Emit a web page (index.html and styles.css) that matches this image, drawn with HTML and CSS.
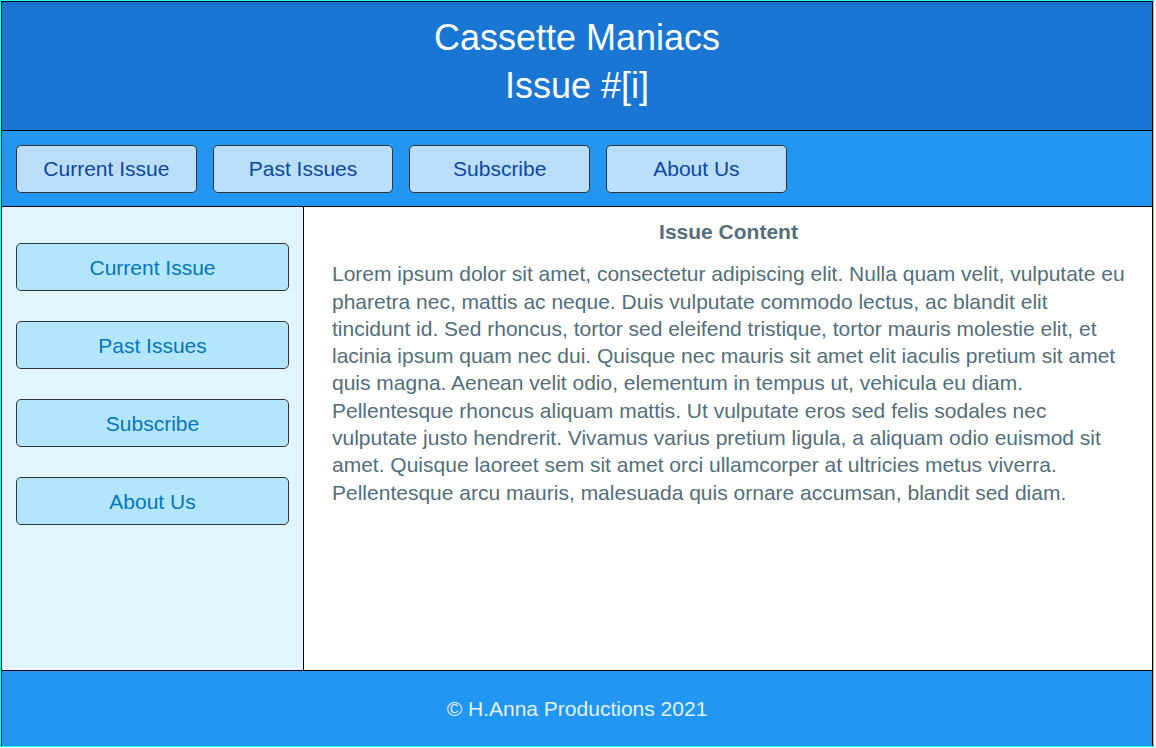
FILE: index.html
```html
<!DOCTYPE html>
<html lang="en">
<head>
<meta charset="utf-8">
<title>Cassette Maniacs</title>
<link rel="stylesheet" href="styles.css">
</head>
<body>
<div class="page">
  <header class="masthead">
    <h1 class="title">Cassette Maniacs<br>Issue #[i]</h1>
  </header>
  <nav class="topnav">
    <a class="topbtn" href="#">Current Issue</a>
    <a class="topbtn" href="#">Past Issues</a>
    <a class="topbtn" href="#">Subscribe</a>
    <a class="topbtn" href="#">About Us</a>
  </nav>
  <aside class="sidebar">
    <a class="sidebtn" href="#">Current Issue</a>
    <a class="sidebtn" href="#">Past Issues</a>
    <a class="sidebtn" href="#">Subscribe</a>
    <a class="sidebtn" href="#">About Us</a>
  </aside>
  <main class="content">
    <h2 class="content-title">Issue Content</h2>
    <p class="content-text">Lorem ipsum dolor sit amet, consectetur adipiscing elit. Nulla quam velit, vulputate eu pharetra nec, mattis ac neque. Duis vulputate commodo lectus, ac blandit elit tincidunt id. Sed rhoncus, tortor sed eleifend tristique, tortor mauris molestie elit, et lacinia ipsum quam nec dui. Quisque nec mauris sit amet elit iaculis pretium sit amet quis magna. Aenean velit odio, elementum in tempus ut, vehicula eu diam. Pellentesque rhoncus aliquam mattis. Ut vulputate eros sed felis sodales nec vulputate justo hendrerit. Vivamus varius pretium ligula, a aliquam odio euismod sit amet. Quisque laoreet sem sit amet orci ullamcorper at ultricies metus viverra. Pellentesque arcu mauris, malesuada quis ornare accumsan, blandit sed diam.</p>
  </main>
  <footer class="footer">© H.Anna Productions 2021</footer>
</div>
</body>
</html>
```

FILE: styles.css
```css
html, body {
  margin: 0;
  padding: 0;
  background: #ffffff;
}

body {
  font-family: "Liberation Sans", Arial, sans-serif;
}

.page {
  box-sizing: border-box;
  width: 1154px;
  height: 747px;
  border: 1px solid #18ffff;
  padding: 1px 1px 0 1px;
  background: #000000;
  display: grid;
  grid-template-columns: 301px 1fr;
  grid-template-rows: 128px 75px 1fr 75px;
  gap: 1px;
}

.masthead {
  grid-column: 1 / 3;
  background: #1976d2;
  display: flex;
  justify-content: center;
  padding-top: 12px;
}

.title {
  margin: 0;
  font-size: 36px;
  font-weight: normal;
  line-height: 48px;
  color: #ffffff;
  text-align: center;
}

.topnav {
  grid-column: 1 / 3;
  background: #2196f3;
  display: flex;
  align-items: center;
  gap: 16px;
  padding-left: 14px;
}

.topbtn {
  box-sizing: border-box;
  width: 180.7px;
  height: 48px;
  display: flex;
  align-items: center;
  justify-content: center;
  background: #bbdefb;
  border: 1px solid #333333;
  border-radius: 5px;
  color: #0d47a1;
  font-size: 21px;
  text-decoration: none;
}

.sidebar {
  background: #e1f5fe;
  display: flex;
  flex-direction: column;
  gap: 30px;
  padding: 36px 14px 0 14px;
}

.sidebtn {
  box-sizing: border-box;
  height: 48px;
  display: flex;
  align-items: center;
  justify-content: center;
  padding-top: 1px;
  background: #b3e5fc;
  border: 1px solid #333333;
  border-radius: 5px;
  color: #0277bd;
  font-size: 21px;
  text-decoration: none;
}

.content {
  background: #ffffff;
  padding: 11px 27px 12px 28px;
  color: #546e7a;
}

.content-title {
  margin: 0 0 15px 0;
  font-size: 21px;
  line-height: 1.3;
  font-weight: bold;
  text-align: center;
}

.content-text {
  margin: 0;
  font-size: 21px;
  line-height: 1.3;
}

.footer {
  grid-column: 1 / 3;
  background: #2196f3;
  color: #e3f2fd;
  font-size: 21px;
  display: flex;
  align-items: center;
  justify-content: center;
}
```
